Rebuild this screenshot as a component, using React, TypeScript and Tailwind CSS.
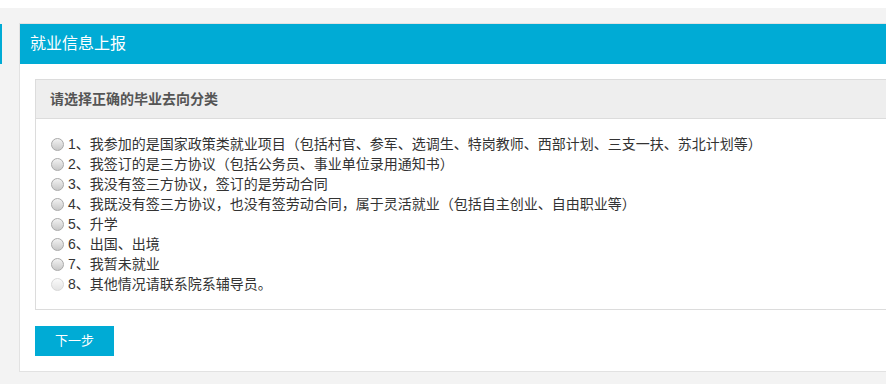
const options = [
  "1、我参加的是国家政策类就业项目（包括村官、参军、选调生、特岗教师、西部计划、三支一扶、苏北计划等）",
  "2、我签订的是三方协议（包括公务员、事业单位录用通知书）",
  "3、我没有签三方协议，签订的是劳动合同",
  "4、我既没有签三方协议，也没有签劳动合同，属于灵活就业（包括自主创业、自由职业等）",
  "5、升学",
  "6、出国、出境",
  "7、我暂未就业",
  "8、其他情况请联系院系辅导员。",
];

function Radio({ disabled }: { disabled?: boolean }) {
  return (
    <span
      className={`inline-block h-[13px] w-[13px] shrink-0 rounded-full border ${
        disabled
          ? "border-[#d8d8d8] bg-gradient-to-b from-[#fafafa] to-[#e4e4e4]"
          : "border-[#a9a9a9] bg-gradient-to-b from-[#f2f2f2] to-[#c8c8c8]"
      }`}
    />
  );
}

export default function App() {
  return (
    <div
      className="min-h-screen overflow-hidden bg-[#f3f3f3] text-[#333]"
      style={{ fontFamily: '"Liberation Sans", "Noto Sans CJK SC", sans-serif' }}
    >
      <div className="h-[8px] bg-white" />
      <div className="flex pt-[15px]">
        <div className="w-[19px] shrink-0 pt-px">
          <div className="h-[40px] w-[2px] bg-[#00abd5]" />
        </div>
        <div className="min-w-0 flex-1 border-y border-l border-[#e2e2e2] bg-white">
          <div className="flex h-[40px] items-center bg-[#00abd5] pl-[10px] text-[16px] text-white">
            就业信息上报
          </div>
          <div className="pb-[15px] pl-[15px] pt-[15px]">
            <div className="border-y border-l border-[#dcdcdc]">
              <div className="flex h-[39px] items-center border-b border-[#dcdcdc] bg-[#eeeeee] pl-[14px] text-[14px] font-bold text-[#555]">
                请选择正确的毕业去向分类
              </div>
              <div className="py-[15px] pl-[15px]">
                {options.map((o, i) => (
                  <label key={o} className="flex h-[20px] items-center gap-[4px] text-[14px] whitespace-nowrap">
                    <Radio disabled={i === 7} />
                    <span>{o}</span>
                  </label>
                ))}
              </div>
            </div>
            <button
              type="button"
              className="mt-[16px] h-[30px] w-[79px] bg-[#00abd5] text-[13px] text-white"
            >
              下一步
            </button>
          </div>
        </div>
      </div>
    </div>
  );
}
